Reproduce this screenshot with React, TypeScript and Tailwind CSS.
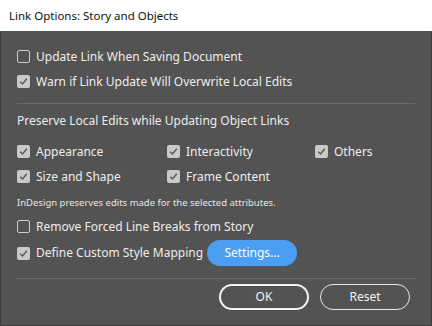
import React from "react";

const font = { fontFamily: '"Noto Sans", "Open Sans", sans-serif' };

const Check = ({ checked }: { checked: boolean }) =>
  checked ? (
    <span className="flex h-[13px] w-[13px] shrink-0 items-center justify-center rounded-[2px] bg-[#c9c9c9]">
      <svg width="9" height="9" viewBox="0 0 9 9">
        <path d="M1.2 4.8 L3.5 7 L7.8 1.8" fill="none" stroke="#5a5a5a" strokeWidth="1.5" />
      </svg>
    </span>
  ) : (
    <span className="h-[13px] w-[13px] shrink-0 rounded-[2px] border border-[#cfcfcf]" />
  );

const Option = ({ label, checked, className = "" }: { label: string; checked: boolean; className?: string }) => (
  <div className={`flex h-[25px] items-center gap-[6px] ${className}`}>
    <Check checked={checked} />
    <span className="text-[12px] text-[#ededed]">{label}</span>
  </div>
);

export default function App() {
  return (
    <div className="flex h-[326px] w-[432px] flex-col" style={font}>
      {/* title bar */}
      <div className="flex h-[31px] shrink-0 items-center bg-white pl-[9px] text-[11.5px] text-[#111]">
        Link Options: Story and Objects
      </div>

      <div className="flex flex-1 flex-col border-x border-b border-[#3d3d3d] bg-[#535353] px-4 pt-[13px]">
        <Option label="Update Link When Saving Document" checked={false} />
        <Option label="Warn if Link Update Will Overwrite Local Edits" checked />

        <div className="mt-[9px] h-px bg-[#6a6a6a]" />

        <div className="mt-[7px] flex h-[20px] items-center text-[12px] text-[#ededed]">
          Preserve Local Edits while Updating Object Links
        </div>

        <div className="mt-[8px] grid grid-cols-[150px_148px_auto]">
          <Option label="Appearance" checked />
          <Option label="Interactivity" checked />
          <Option label="Others" checked />
          <Option label="Size and Shape" checked />
          <Option label="Frame Content" checked />
        </div>

        <div className="mt-[6px] flex h-[16px] items-center text-[9.5px] text-[#e6e6e6]">
          InDesign preserves edits made for the selected attributes.
        </div>

        <Option label="Remove Forced Line Breaks from Story" checked={false} className="mt-[3px]" />

        <div className="flex h-[28px] items-center">
          <Option label="Define Custom Style Mapping" checked />
          <button className="ml-[4px] h-[26px] w-[90px] rounded-full bg-[#4b9ef1] text-[12px] text-white">
            Settings...
          </button>
        </div>

        <div className="mt-[11px] h-px bg-[#6a6a6a]" />

        <div className="mt-[5px] flex justify-end gap-[11px] pr-[5px]">
          <button className="h-[26px] w-[90px] rounded-full border-2 border-[#f2f2f2] text-[12px] text-[#f2f2f2]">
            OK
          </button>
          <button className="h-[26px] w-[90px] rounded-full border border-[#e6e6e6] text-[12px] text-[#f2f2f2]">
            Reset
          </button>
        </div>
      </div>
    </div>
  );
}
